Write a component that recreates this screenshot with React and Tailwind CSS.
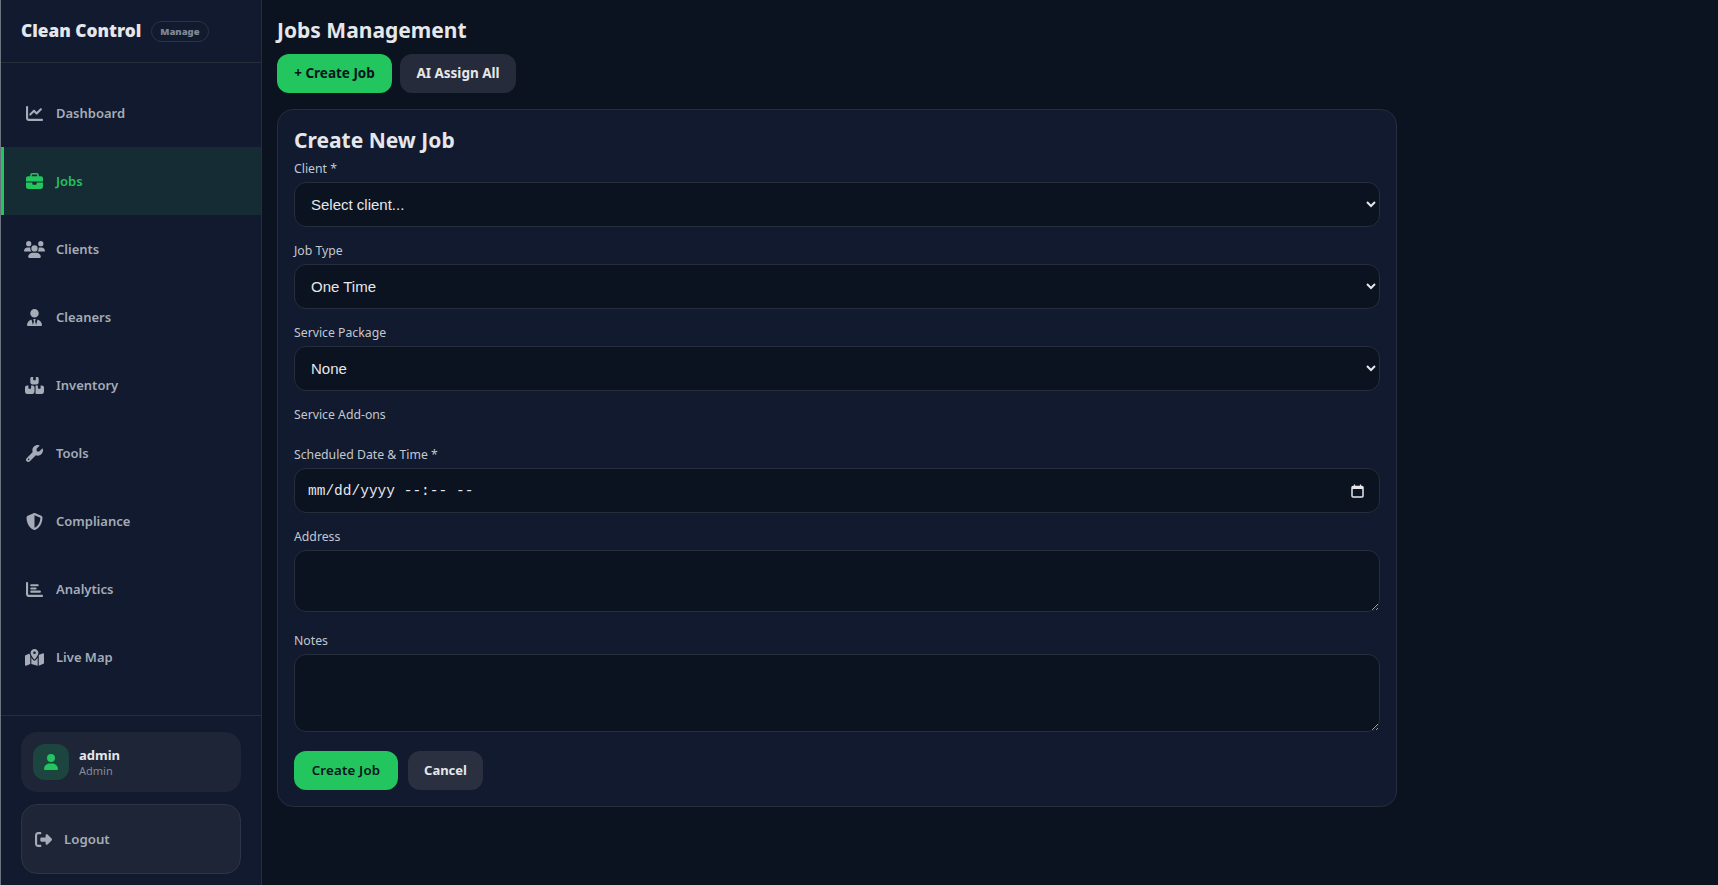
import { FaBoxesStacked, FaBriefcase, FaChartBar, FaChartLine, FaMapLocationDot, FaRightFromBracket, FaShieldHalved, FaUser, FaUsers, FaUserTie, FaWrench } from 'react-icons/fa6';

const navItems = [
  { label: 'Dashboard', icon: FaChartLine, iconClass: 'w-[17px]' },
  { label: 'Jobs', icon: FaBriefcase, iconClass: 'w-[17px]', active: true },
  { label: 'Clients', icon: FaUsers, iconClass: 'w-[21px]' },
  { label: 'Cleaners', icon: FaUserTie, iconClass: 'w-[15px]' },
  { label: 'Inventory', icon: FaBoxesStacked, iconClass: 'w-[19px]' },
  { label: 'Tools', icon: FaWrench, iconClass: 'w-[17px]' },
  { label: 'Compliance', icon: FaShieldHalved, iconClass: 'w-[17px]' },
  { label: 'Analytics', icon: FaChartBar, iconClass: 'w-[17px]' },
  { label: 'Live Map', icon: FaMapLocationDot, iconClass: 'w-[19px]' },
];

const fieldClass =
  'block h-[45px] w-full rounded-xl border border-[#262d3b] bg-[#0b1220] px-3 text-[15px] text-[#e5e7eb] [color-scheme:dark] [font-family:"Liberation_Sans",sans-serif]';
const areaClass = 'block w-full rounded-xl border border-[#262d3b] bg-[#0b1220] px-3 [color-scheme:dark]';
const labelClass = 'mb-[4px] block pt-px text-[12.25px] leading-[18px] text-[#c3c8d0]';

function Sidebar() {
  return (
    <aside className="flex h-[885px] w-[262px] shrink-0 flex-col border-r border-l border-r-[#262d3b] border-l-[#6b7280] bg-[#111a2e]">
      <div className="flex h-[63px] shrink-0 items-center gap-[10px] border-b border-[#262d3b] pl-[20px]">
        <span className="text-[17.25px] font-black text-[#e5e7eb]">Clean Control</span>
        <span className="rounded-full border border-[#2c3445] px-[8px] py-[2px] text-[9.5px] leading-[15px] font-black text-[#7f8794]">Manage</span>
      </div>
      <nav className="flex flex-1 flex-col pt-[16px]">
        {navItems.map((item) => {
          const Icon = item.icon;
          return (
            <a
              key={item.label}
              href="#"
              className={`flex h-[68px] items-center gap-[11px] border-l-[3px] pl-[19px] text-[13px] font-semibold ${
                item.active ? 'border-[#22c55e] bg-[#152c35] text-[#22c55e]' : 'border-transparent text-[#a5acb8]'
              }`}
            >
              <span className="flex w-[22px] justify-center">
                <Icon className={`h-[17px] shrink-0 ${item.iconClass}`} />
              </span>
              <span className="pt-[2px]">{item.label}</span>
            </a>
          );
        })}
      </nav>
      <div className="flex flex-col gap-3 border-t border-[#262d3b] px-[20px] pt-4 pb-[11px]">
        <div className="flex h-[60px] items-center gap-[10px] rounded-2xl bg-[#1e2536] pl-3">
          <div className="flex h-9 w-9 items-center justify-center rounded-xl bg-[#1d4540] text-[#22c55e]">
            <FaUser className="h-4 w-[14px]" />
          </div>
          <div>
            <p className="text-[13px] leading-[16px] font-bold text-[#e5e7eb]">admin</p>
            <p className="text-[11px] leading-[15px] text-[#858c99]">Admin</p>
          </div>
        </div>
        <button type="button" className="flex h-[70px] items-center gap-3 rounded-2xl border border-[#2c3445] bg-[#1e2536] pl-[13px] text-[13.25px] font-semibold text-[#a5acb8]">
          <FaRightFromBracket className="h-[17px] w-[17px]" />
          <span className="pt-[2px]">Logout</span>
        </button>
      </div>
    </aside>
  );
}

function JobForm() {
  return (
    <section className="w-[1120px] rounded-2xl border border-[#262d3b] bg-[#111a2e] p-4">
      <h2 className="mt-[2px] mb-[6px] text-[21px] leading-[25px] font-bold text-[#e5e7eb]">Create New Job</h2>
      <div className="mb-[14px]">
        <label className={labelClass}>Client *</label>
        <select className={fieldClass} defaultValue="">
          <option value="">Select client...</option>
        </select>
      </div>
      <div className="mb-[14px]">
        <label className={labelClass}>Job Type</label>
        <select className={fieldClass} defaultValue="one">
          <option value="one">One Time</option>
        </select>
      </div>
      <div className="mb-[14px]">
        <label className={labelClass}>Service Package</label>
        <select className={fieldClass} defaultValue="none">
          <option value="none">None</option>
        </select>
      </div>
      <div className="mb-[21px]">
        <label className={labelClass}>Service Add-ons</label>
      </div>
      <div className="mb-[14px]">
        <label className={labelClass}>Scheduled Date &amp; Time *</label>
        <div className="flex h-[45px] w-full items-center justify-between rounded-xl border border-[#262d3b] bg-[#0b1220] pr-[15px] pl-[13px] text-[14.5px] text-[#e5e7eb] [font-family:'Liberation_Mono',monospace]">
          <span className="whitespace-pre pt-[2px]">mm/dd/yyyy --:-- --</span>
          <svg width="13" height="14" viewBox="0 0 13 14" fill="none" className="shrink-0">
            <rect x="1" y="2.5" width="11" height="10.5" rx="1" stroke="#e5e7eb" strokeWidth="1.5" />
            <path d="M1 4h11" stroke="#e5e7eb" strokeWidth="2" />
            <path d="M3.5 0.5v2M9.5 0.5v2" stroke="#e5e7eb" strokeWidth="1.2" />
          </svg>
        </div>
      </div>
      <div className="mb-[19px]">
        <label className={labelClass}>Address</label>
        <textarea className={`${areaClass} h-[62px]`} />
      </div>
      <div>
        <label className={labelClass}>Notes</label>
        <textarea className={`${areaClass} h-[78px]`} />
      </div>
      <div className="mt-[19px] flex gap-[10px]">
        <button type="button" className="h-[39px] w-[104px] rounded-xl bg-[#22c55e] text-[13.25px] font-semibold tracking-[0.2px] text-[#0b1220]">Create Job</button>
        <button type="button" className="h-[39px] w-[75px] rounded-xl bg-[#2a3040] text-[13px] font-bold text-[#e5e7eb]">Cancel</button>
      </div>
    </section>
  );
}

export default function App() {
  return (
    <div className="flex h-[885px] overflow-hidden bg-[#0b1220] [font-family:'Noto_Sans',sans-serif]">
      <Sidebar />
      <main className="flex-1 pt-[15px] pl-[15px]">
        <h1 className="text-[21px] leading-[30px] font-bold text-[#e5e7eb]">Jobs Management</h1>
        <div className="mt-[9px] mb-4 flex gap-2">
          <button type="button" className="h-[39px] w-[115px] rounded-xl bg-[#22c55e] text-[13.5px] font-bold text-[#0b1220]">+ Create Job</button>
          <button type="button" className="h-[39px] w-[116px] rounded-xl bg-[#252b3a] text-[13.5px] font-bold text-[#e5e7eb]">AI Assign All</button>
        </div>
        <JobForm />
      </main>
    </div>
  );
}
